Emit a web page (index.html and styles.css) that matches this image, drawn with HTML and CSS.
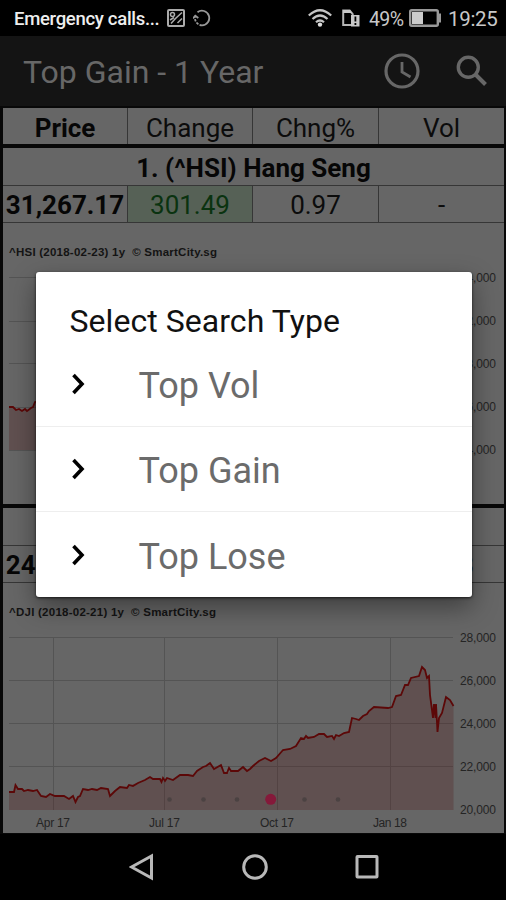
FILE: index.html
```html
<!DOCTYPE html>
<html lang="en">
<head>
  <meta charset="UTF-8">
  <title>Top Gain - 1 Year</title>
  <link rel="stylesheet" href="styles.css">
</head>
<body>
  <div class="phone">
    <!-- Status bar -->
    <div class="status">
      <span class="carrier">Emergency calls...</span>
      <svg class="ic-image" width="18" height="18" viewBox="0 0 18 18" fill="none" stroke="#aaa" stroke-width="2">
        <rect x="1" y="1" width="16" height="16" rx="1"/>
        <circle cx="5.500" cy="5.500" r="2" stroke-width="1.500"/>
        <path d="M15 3.500 8.500 9.500 4 14.500M3 11l4-2.500M10.500 14l4.500-4.500" stroke-width="1.500"/>
      </svg>
      <svg class="ic-sync" width="18" height="18" viewBox="0 0 18 18" fill="none" stroke="#999" stroke-width="1.800">
        <path d="M4.500 3.200A7.300 7.300 0 1 1 9 16.300"/>
        <path d="M9 16.300A7.300 7.300 0 0 1 2.200 7" stroke-dasharray="2.500 1.300"/>
        <path d="M0 9.500l2.300-2.800 3 2.300"/>
      </svg>
      <span class="spacer"></span>
      <svg class="ic-wifi" width="24" height="18" viewBox="0 0 24 18" fill="none" stroke="#c4c4c4" stroke-width="2.200">
        <path d="M.8 6.500Q12-4 23.200 6.500M4.500 10Q12 3 19.500 10M8 13.300q4-3.600 8 0"/>
        <circle cx="12" cy="15.600" r="2.200" fill="#ddd" stroke="none"/>
      </svg>
      <svg class="ic-sim" width="18" height="18" viewBox="0 0 18 18">
        <path d="M1.200 16V1.500h6.500l3 3.500v11z" fill="none" stroke="#b5b5b5" stroke-width="2"/>
        <path d="M1 1h7l2 3H1z" fill="#c8c8c8"/>
        <path d="M9 6h8.500v11.500H9z" fill="#c8c8c8"/>
        <path d="M12.500 7.500h1.800v5h-1.800zM12.500 14h1.800v2h-1.800z" fill="#000"/>
      </svg>
      <span class="percent">49%</span>
      <svg class="ic-battery" width="33" height="18" viewBox="0 0 33 18">
        <rect x="1.200" y="1.200" width="27.600" height="15.600" rx="1.500" fill="none" stroke="#999" stroke-width="2.400"/>
        <rect x="3" y="3" width="11" height="12" fill="#ccc"/>
        <path d="M30 4.500h2v9h-2z" fill="#999"/>
      </svg>
      <span class="clock">19:25</span>
    </div>

    <!-- App bar -->
    <div class="appbar">
      <h1>Top Gain - 1 Year</h1>
      <svg class="ic-clock" width="36" height="36" viewBox="0 0 36 36" fill="none" stroke="#676767" stroke-width="3.200">
        <circle cx="18" cy="18" r="16"/>
        <path d="M18 9v10l8.500 5" stroke-width="2.800"/>
      </svg>
      <svg class="ic-search" width="32" height="32" viewBox="0 0 32 32" fill="none" stroke="#676767" stroke-width="3.400">
        <circle cx="12.300" cy="12.300" r="10"/>
        <path d="M19.500 19.500 29.500 29.500" stroke-width="4"/>
      </svg>
    </div>

    <!-- Stock list -->
    <div class="list">
      <div class="row head">
        <span class="bold">Price</span><span>Change</span><span>Chng%</span><span>Vol</span>
      </div>
      <div class="stock">
        <div class="name">1. (^HSI) Hang Seng</div>
        <div class="row values">
          <span class="bold">31,267.17</span><span class="up">301.49</span><span>0.97</span><span>-</span>
        </div>
        <svg class="chart" width="501" height="281" viewBox="3 223 501 281">
          <text class="caption" x="9" y="256" textLength="208" xml:space="preserve">^HSI (2018-02-23) 1y  © SmartCity.sg</text>
          <path class="grid" d="M9 277.500H453M9 321.500H453M9 363.500H453M9 407.500H453M9 450.500H453"/>
          <path class="area" d="M9 407 13 407 16 410 19 409 22 411 25 409 27 411 31 408 33 407 35 402 60 398V450H9Z"/>
          <path class="line" d="M9 407 13 407 16 410 19 409 22 411 25 409 27 411 31 408 33 407 35 402 60 398"/>
          <g class="axis">
            <text x="460" y="282" textLength="36">34,000</text>
            <text x="460" y="325" textLength="36">32,000</text>
            <text x="460" y="368" textLength="36">28,000</text>
            <text x="460" y="411" textLength="36">26,000</text>
            <text x="460" y="454" textLength="36">24,000</text>
          </g>
        </svg>
      </div>
      <div class="stock">
        <div class="name"></div>
        <div class="row values">
          <span class="bold">24,797.78</span><span></span><span></span><span>418.3</span>
        </div>
        <svg class="chart" width="501" height="250" viewBox="3 583 501 250">
          <text class="caption" x="9" y="616" textLength="207" xml:space="preserve">^DJI (2018-02-21) 1y  © SmartCity.sg</text>
          <path class="grid" d="M9 637.500H453M9 680.500H453M9 723.500H453M9 766.500H453M53.500 638V810M164.500 638V810M277.500 638V810M390.500 638V810"/>
          <path class="area" d="M9 792 14 792 15.500 785 18 789 22 789 24 791 37 790 41 796 46 797 50 794 55 796 64 796 69 799 73 796 75.500 802 78 797 80 796 83 789 88 790 92 789 97 790 101 788 108 789 110 796 115 791 120 787 127 788 129 785 138 783 145 780 150 777 153 779 160 779 163 781 166 778 173 780 180 775 188 775 193 776 197 771 203 767 210 763 214 769 221 765 224 773 228 773 231 770 238 771 243 767 247 771 250 769 253 766 259 761 265 758 271 761 276 758 283 750 290 749 296 746 301 738 306 736 314 737 319 734 324 734 327 737 332 738 335 736 339 736 344 733 349 732 352 718 356 719 359 720 363 716 367 714 369 711 374 707 388 708 392 707 396 696 401 695 405 685 408 685 411 678 419 676 422 667 427 675 429 678 430 695 433 708 434 717 435 705 437.500 732 439 718 442 713 446 697 450 700 453.500 706V810H9Z"/>
          <path class="line" d="M9 792 14 792 15.500 785 18 789 22 789 24 791 28 790 33 791 37 790 41 796 46 797 50 794 55 796 64 796 69 799 73 796 75.500 802 78 797 80 796 83 789 88 790 92 789 97 790 101 788 108 789 110 796 115 791 120 787 127 788 129 785 133 786 138 783 145 780 150 777 153 779 160 779 161.500 782 163 778 165 781 167 778 173 780 180 775 188 775 193 776 197 771 203 767 206 766 210 763 214 769 221 765 224 773 227 773 229 768 231 771 238 771 243 767 247 771 250 769 253 766 259 761 265 758 271 761 276 758 283 750 290 749 296 746 301 738 304 739 306 736 308 738 314 737 319 734 324 734 327 737 332 736 334 739 336 735 339 736 344 733 349 732 352 718 356 719 359 720 363 716 367 714 369 711 374 707 388 708 392 707 396 696 401 695 405 685 408 685 411 678 419 676 422 667 425 670 427 678 429 676 430 695 433 718 434 704 435.500 718 436 704 437.500 732 439 718 442 713 446 697 450 700 453.500 706"/>
          <g class="axis">
            <text x="460" y="642" textLength="36">28,000</text>
            <text x="460" y="685" textLength="36">26,000</text>
            <text x="460" y="728" textLength="36">24,000</text>
            <text x="460" y="771" textLength="36">22,000</text>
            <text x="460" y="814" textLength="36">20,000</text>
            <text x="36" y="827" textLength="34">Apr 17</text>
            <text x="149" y="827" textLength="31">Jul 17</text>
            <text x="260" y="827" textLength="34">Oct 17</text>
            <text x="373" y="827" textLength="34">Jan 18</text>
          </g>
          <!-- page dots -->
          <g fill="#4b4242">
            <circle cx="169.500" cy="799.500" r="2.300"/>
            <circle cx="203.500" cy="799.500" r="2.300"/>
            <circle cx="237" cy="799.500" r="2.300"/>
            <circle cx="304.500" cy="799.500" r="2.300"/>
            <circle cx="338" cy="799.500" r="2.300"/>
          </g>
          <circle cx="270.700" cy="799.300" r="5.500" fill="#85193a"/>
        </svg>
      </div>
    </div>

    <!-- Android nav bar -->
    <div class="navbar">
      <svg width="26" height="28" viewBox="0 0 26 28"><path d="M2.500 14 22.500 3V25Z"/></svg>
      <svg width="26" height="28" viewBox="0 0 26 28"><circle cx="13" cy="14" r="11.300"/></svg>
      <svg width="26" height="28" viewBox="0 0 26 28"><rect x="3" y="3.500" width="20" height="20.500" rx=".5"/></svg>
    </div>

    <!-- Search type dialog -->
    <div class="dialog">
      <h2>Select Search Type</h2>
      <ul>
        <li><svg width="16" height="24" viewBox="0 0 16 24"><path d="M2.500 3 11 12 2.500 21"/></svg><span>Top Vol</span></li>
        <li><svg width="16" height="24" viewBox="0 0 16 24"><path d="M2.500 3 11 12 2.500 21"/></svg><span>Top Gain</span></li>
        <li><svg width="16" height="24" viewBox="0 0 16 24"><path d="M2.500 3 11 12 2.500 21"/></svg><span>Top Lose</span></li>
      </ul>
    </div>
  </div>
</body>
</html>
```
FILE: styles.css
```css
* {
  box-sizing: border-box;
}

body {
  margin: 0;
  background: #000;
  font-family: Roboto, "Liberation Sans", sans-serif;
}

.phone {
  position: relative;
  width: 506px;
  height: 900px;
  overflow: hidden;
}

svg {
  display: block;
  flex: none;
}

.status {
  display: flex;
  align-items: center;
  height: 36px;
  padding: 0 7px 0 14px;
  color: #c8c8c8;
  font-size: 20px;
  white-space: nowrap;
}

.carrier {
  width: 153px;
  padding-top: 2px;
  color: #eee;
  font-size: 18.5px;
  font-weight: 500;
  letter-spacing: -.3px;
}

.ic-sync {
  margin-left: 8px;
}

.spacer {
  flex: 1;
}

.ic-sim {
  margin-left: 10px;
}

.percent {
  width: 37px;
  margin-left: 9px;
  padding-top: 2px;
  font-size: 19.5px;
  letter-spacing: -.6px;
}

.clock {
  width: 51px;
  margin-left: 6px;
  padding-top: 2px;
  font-size: 20.5px;
  letter-spacing: -.3px;
}

.ic-battery {
  margin-left: 3px;
}

.appbar {
  display: flex;
  align-items: center;
  height: 70px;
  padding: 0 18px 0 23px;
  background: #141414;
}

.appbar h1 {
  flex: 1;
  margin: 2px 0 0;
  color: #676767;
  font-size: 32px;
  font-weight: 400;
}

.ic-search {
  margin-left: 36px;
}

.list {
  height: 728px;
  padding: 2px 2px 0 3px;
  background: #080808;
}

.row {
  display: grid;
  grid-template-columns: 125px 125px 126px 125px;
  height: 38px;
  overflow: hidden;
  background: #666;
  color: #0c0c0c;
  font-size: 26px;
  line-height: 38px;
  text-align: center;
}

.row span {
  border-right: 1px solid #363636;
}

.row span:last-child {
  border-right: 0;
}

.head {
  height: 36px;
  line-height: 40px;
}

.bold,
.name {
  color: #060606;
  font-weight: 700;
}

.stock {
  margin-top: 4px;
}

.name {
  height: 37px;
  background: #666;
  font-size: 26px;
  line-height: 40px;
  text-align: center;
}

.values {
  border-top: 1px solid #363636;
  border-bottom: 1px solid #363636;
}

.row .up {
  background: #566156;
  color: #0a3310;
}

.chart {
  background: #666;
}

.caption {
  fill: #141414;
  font: bold 11.5px "Liberation Sans", sans-serif;
}

.axis {
  fill: #242424;
  font: 12px "Liberation Sans", sans-serif;
}

.grid {
  fill: none;
  stroke: #545454;
}

.area {
  fill: rgba(80, 20, 20, .26);
}

.line {
  fill: none;
  stroke: #5c0808;
  stroke-width: 1.8;
}

.navbar {
  display: flex;
  justify-content: center;
  gap: 86.5px;
  height: 66px;
  padding: 19px 0 0 3px;
}

.navbar svg {
  fill: none;
  stroke: #b8b8b8;
  stroke-width: 3;
}

.dialog {
  position: absolute;
  top: 272px;
  left: 35.5px;
  width: 436px;
  height: 325px;
  border-radius: 3px;
  background: #fff;
  box-shadow: 0 10px 26px rgba(0, 0, 0, .4), 0 1px 3px rgba(0, 0, 0, .7);
}

.dialog h2 {
  height: 70px;
  margin: 0;
  padding: 30px 0 0 34px;
  color: #111;
  font-size: 32px;
  font-weight: 400;
  line-height: 38px;
  letter-spacing: .05px;
}

.dialog ul {
  margin: 0;
  padding: 0;
  list-style: none;
}

.dialog li {
  display: flex;
  align-items: center;
  height: 85px;
  padding-left: 35px;
  border-bottom: 1px solid #eee;
  color: #6b6b6b;
  font-size: 36px;
}

.dialog li:last-child {
  border-bottom: 0;
}

.dialog li span {
  padding-top: 4px;
}

.dialog li svg {
  margin-right: 52px;
  fill: none;
  stroke: #000;
  stroke-width: 3.6;
}
```
